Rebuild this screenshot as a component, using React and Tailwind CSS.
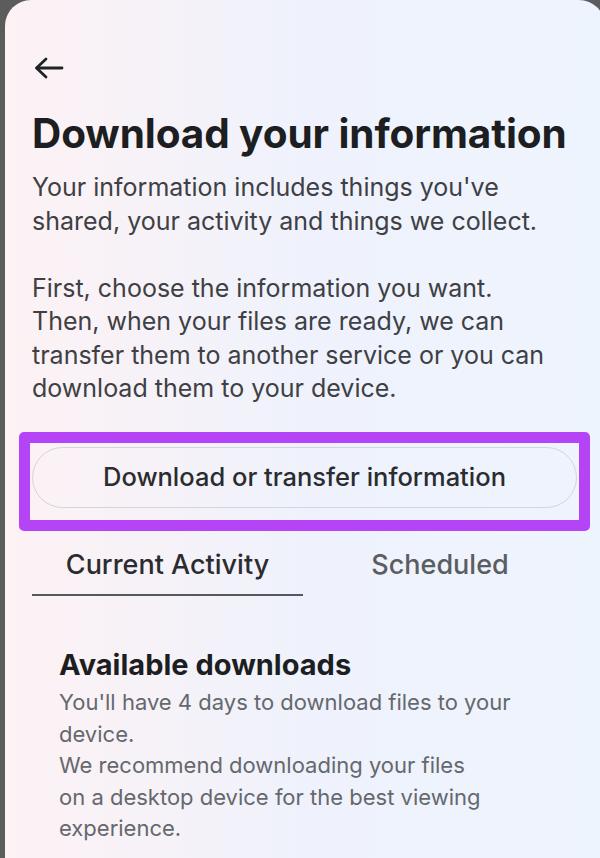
export default function App() {
  return (
    <div className="h-[858px] w-[600px] overflow-hidden bg-[#5c5c5c] pl-[5px] font-['Inter',sans-serif]">
      <div className="h-full w-[600px] rounded-t-[26px] bg-gradient-to-r from-[#fdf2f4] via-[#eff2fc] to-[#eef4fd] pl-[27px]">
        <div className="pt-[57px]">
          <svg width="30" height="22" viewBox="0 0 30 22" fill="none" stroke="#1f2226" strokeWidth="2.8" strokeLinecap="round" strokeLinejoin="round" className="ml-[2px] block">
            <path d="M28 11H3" />
            <path d="M12 2L2.5 11L12 20" />
          </svg>
        </div>

        <h1 className="mt-[31px] text-[40.5px] font-bold leading-[48px] tracking-[-0.1px] text-[#1c1e21]">
          Download your information
        </h1>

        <div className="mt-[13px] text-[25px] leading-[33.5px] text-[#3e4044]">
          <p>Your information includes things you've<br />shared, your activity and things we collect.</p>
          <p className="mt-[33.5px]">
            First, choose the information you want.<br />
            Then, when your files are ready, we can<br />
            transfer them to another service or you can<br />
            download them to your device.
          </p>
        </div>

        <div className="ml-[-13px] mt-[26px] w-[571px] rounded-[5px] border-[11px] border-[#b444f6] px-[2px] pb-[12px] pt-[4px]">
          <button className="flex h-[61px] w-full items-center justify-center rounded-full border border-[#d3d5da] text-[25.5px] font-medium text-[#2a2c30]">
            Download or transfer information
          </button>
        </div>

        <div className="mt-[18px] flex w-[545px]">
          <div className="w-[271px] border-b-[2px] border-[#55585c] pb-[13px] text-center text-[27px] font-medium leading-[32px] text-[#2a2c30]">
            Current Activity
          </div>
          <div className="flex-1 pb-[13px] text-center text-[27px] font-medium leading-[32px] text-[#5a5d62]">
            Scheduled
          </div>
        </div>

        <div className="ml-[27px] mt-[51px]">
          <h2 className="text-[29px] font-bold leading-[36px] text-[#1c1e21]">Available downloads</h2>
          <p className="mt-[4.5px] text-[22px] leading-[31.5px] text-[#65686d]">
            You'll have 4 days to download files to your<br />
            device.<br />
            We recommend downloading your files<br />
            on a desktop device for the best viewing<br />
            experience.
          </p>
        </div>
      </div>
    </div>
  )
}
